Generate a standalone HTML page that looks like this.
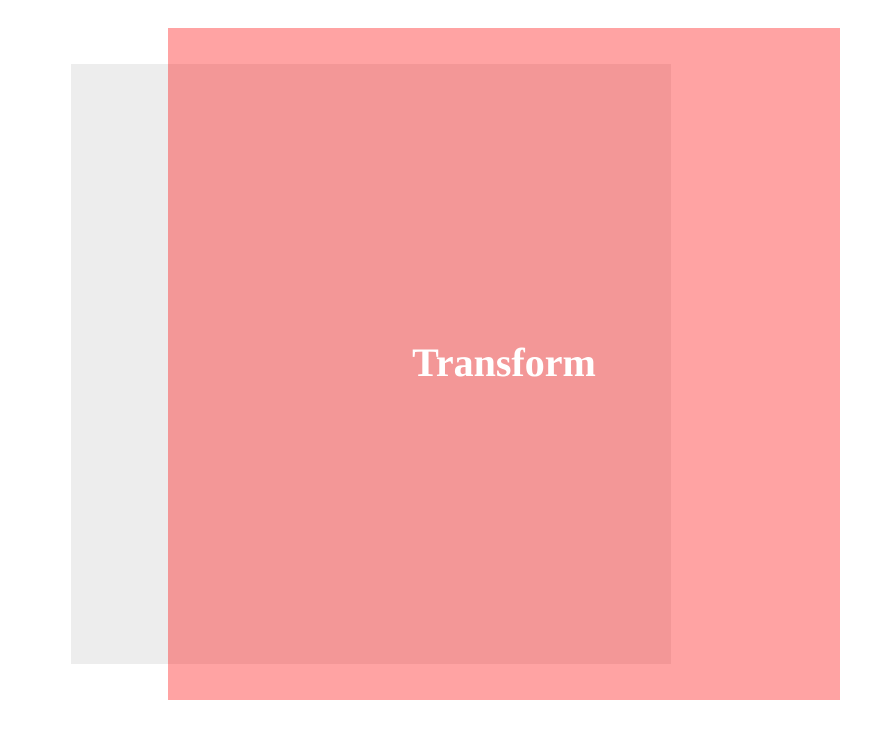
<!DOCTYPE html>
<html>
<head>
<style>
html,body{margin:0;padding:0;background:#fff;width:870px;height:730px;overflow:hidden;}
.g{position:absolute;left:71px;top:64px;width:600px;height:600px;background:#ededed;}
.p{position:absolute;left:168px;top:28px;width:672px;height:672px;background:rgba(255,0,0,0.36);}
.t{position:absolute;left:168px;top:339px;width:672px;text-align:center;font-family:"Liberation Serif",serif;font-weight:bold;font-size:40px;color:#fff;line-height:48px;}
</style>
</head>
<body>
<div class="g"></div>
<div class="p"></div>
<div class="t">Transform</div>
</body>
</html>
